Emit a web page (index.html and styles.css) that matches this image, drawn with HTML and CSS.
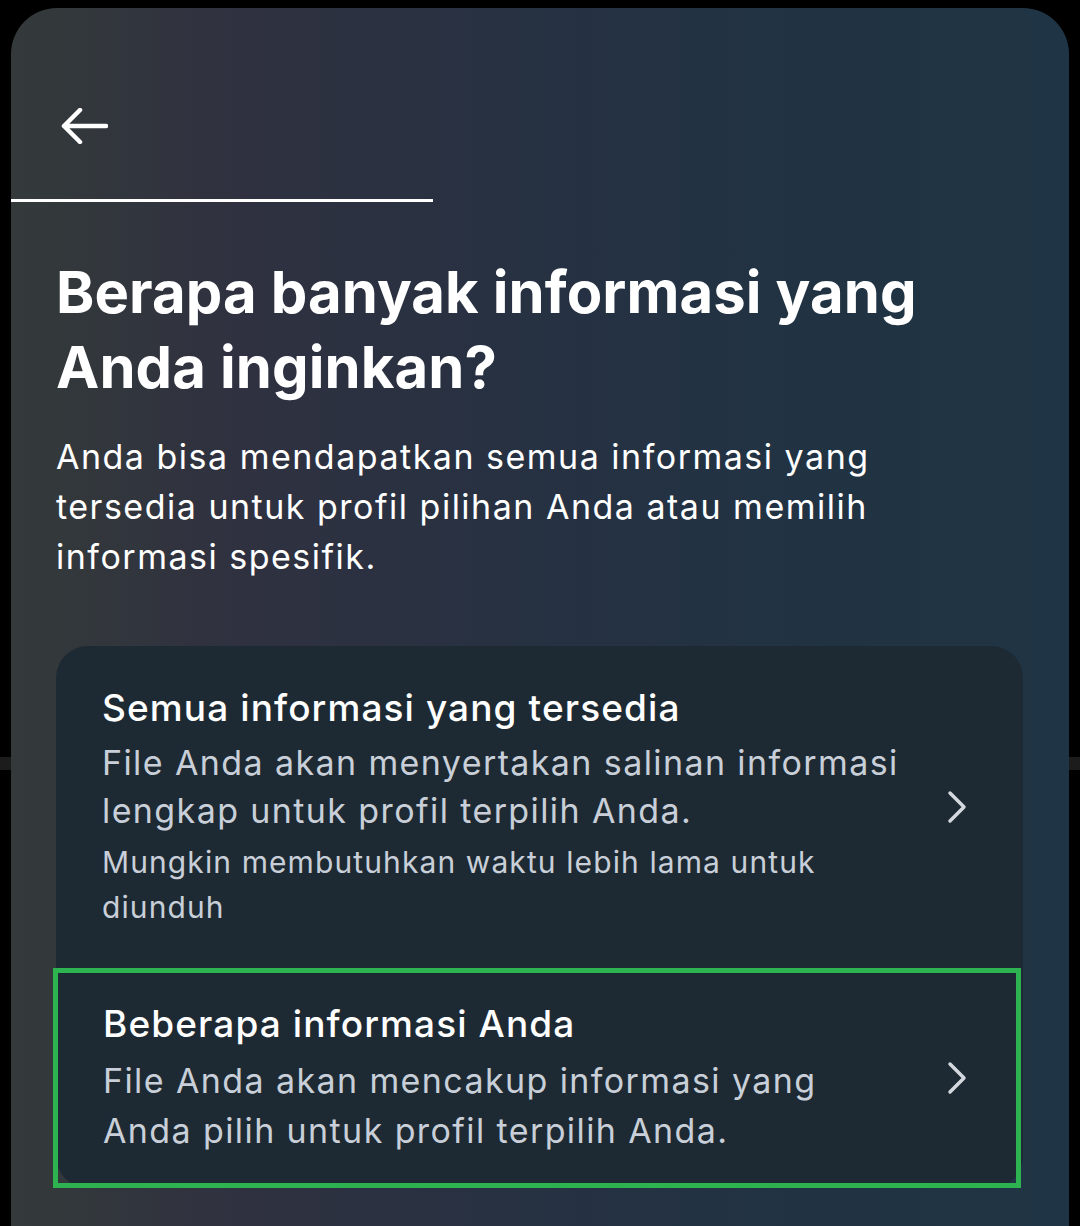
FILE: index.html
```html
<!DOCTYPE html>
<html lang="id">
<head>
    <meta charset="UTF-8">
    <meta name="viewport" content="width=device-width, initial-scale=1.0">
    <title>Unduh informasi Anda</title>
    <link rel="stylesheet" href="styles.css">
</head>
<body>
    <div class="sheet">
        <div class="top-bar">
            <button class="back" type="button" aria-label="Kembali">
                <svg width="48" height="36" viewBox="0 0 48 36">
                    <path d="M46 18 H4 M20 2 L4 18 L20 34" fill="none" stroke="#fff" stroke-width="4.5" stroke-linecap="round" stroke-linejoin="round"/>
                </svg>
            </button>
        </div>
        <div class="progress"><div class="progress-fill"></div></div>

        <div class="content">
            <h1>Berapa banyak informasi yang Anda inginkan?</h1>
            <p class="lead">Anda bisa mendapatkan semua informasi yang tersedia untuk profil pilihan Anda atau memilih informasi spesifik.</p>

            <div class="card">
                <div class="option">
                    <div class="option-text">
                        <div class="option-title">Semua informasi yang tersedia</div>
                        <div class="option-desc">File Anda akan menyertakan salinan informasi lengkap untuk profil terpilih Anda.</div>
                        <div class="option-note">Mungkin membutuhkan waktu lebih lama untuk diunduh</div>
                    </div>
                    <svg class="chevron" width="24" height="34" viewBox="0 0 24 34">
                        <path d="M5 3 L19 17 L5 31" fill="none" stroke="#d3d8df" stroke-width="3.5" stroke-linecap="round" stroke-linejoin="round"/>
                    </svg>
                </div>
                <div class="option selected">
                    <div class="option-text">
                        <div class="option-title">Beberapa informasi Anda</div>
                        <div class="option-desc wide">File Anda akan mencakup informasi yang Anda pilih untuk profil terpilih Anda.</div>
                    </div>
                    <svg class="chevron" width="24" height="34" viewBox="0 0 24 34">
                        <path d="M5 3 L19 17 L5 31" fill="none" stroke="#d3d8df" stroke-width="3.5" stroke-linecap="round" stroke-linejoin="round"/>
                    </svg>
                </div>
            </div>
        </div>
    </div>
</body>
</html>
```

FILE: styles.css
```css
html, body {
    margin: 0;
    padding: 0;
}
body {
    font-family: Inter, "Noto Sans", sans-serif;
    color: #fff;
    background: linear-gradient(to bottom, #000 757px, #1c1c1c 757px, #1c1c1c 770px, #000 770px);
    min-height: 1226px;
    overflow: hidden;
}
.sheet {
    margin: 8px 11px 0;
    height: 1218px;
    border-radius: 46px 46px 0 0;
    background: linear-gradient(90deg, #343a3a 0%, #2f3140 22%, #263142 50%, #213343 75%, #1f3444 100%);
    overflow: hidden;
}
.top-bar {
    height: 191px;
    padding-top: 100px;
    box-sizing: border-box;
}
.back {
    margin: 0 0 0 49px;
    padding: 0;
    border: none;
    background: none;
    display: block;
}
.back svg {
    display: block;
}
.progress {
    height: 3px;
}
.progress-fill {
    width: 422px;
    height: 3px;
    background: #fff;
}
.content {
    padding: 0 0 0 45px;
}
h1 {
    margin: 53px 0 0;
    font-size: 58px;
    line-height: 75px;
    font-weight: 700;
    letter-spacing: 0.1px;
    max-width: 900px;
}
.lead {
    margin: 27px 0 0;
    font-size: 34px;
    line-height: 50px;
    letter-spacing: 1.5px;
    max-width: 900px;
}
.card {
    margin-top: 64px;
    width: 967px;
    background: #1e2a33;
    border-radius: 32px;
}
.option {
    display: flex;
    align-items: center;
    padding: 38px 54px 38px 46px;
}
.option-text {
    flex: 1;
}
.option-title {
    font-size: 37px;
    line-height: 48px;
    font-weight: 500;
    letter-spacing: 1.1px;
}
.option-desc {
    margin-top: 7px;
    font-size: 34px;
    line-height: 48px;
    letter-spacing: 1.4px;
    color: #c8cfd8;
}
.option-desc.wide {
    margin-top: 8px;
    line-height: 50px;
    max-width: 760px;
}
.option-note {
    margin-top: 5px;
    font-size: 30px;
    line-height: 45px;
    letter-spacing: 1.1px;
    color: #c8cfd8;
    max-width: 780px;
}
.chevron {
    margin-left: auto;
    flex-shrink: 0;
}
.option.selected {
    margin-left: -3px;
    width: 968px;
    box-sizing: border-box;
    border: 5px solid #2db350;
    padding: 27px 47px 27px 45px;
}
```
